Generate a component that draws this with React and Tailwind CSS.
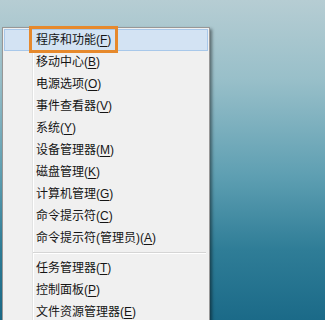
import React from 'react';

const items = [
    { label: '程序和功能', key: 'F', active: true },
    { label: '移动中心', key: 'B' },
    { label: '电源选项', key: 'O' },
    { label: '事件查看器', key: 'V' },
    { label: '系统', key: 'Y' },
    { label: '设备管理器', key: 'M' },
    { label: '磁盘管理', key: 'K' },
    { label: '计算机管理', key: 'G' },
    { label: '命令提示符', key: 'C' },
    { label: '命令提示符(管理员)', key: 'A' },
    { sep: true },
    { label: '任务管理器', key: 'T' },
    { label: '控制面板', key: 'P' },
    { label: '文件资源管理器', key: 'E' },
];

const MenuRow = ({ item }) => {
    if (item.sep) {
        return (
            <div className="h-[8px] flex flex-col justify-center pl-[29px] pr-[2px]">
                <div className="h-px bg-[#d5d5d5]" />
                <div className="h-px bg-white" />
            </div>
        );
    }
    return (
        <div className="relative h-[22px] flex items-center">
            {item.active && (
                <div className="absolute inset-y-0 left-0 right-0 bg-[#d3e3f3] border border-[#a8c8ea]" />
            )}
            <span className="relative pl-[32px] text-[12px] text-[#151515] leading-none">
                {item.label}(<span className="underline underline-offset-2">{item.key}</span>)
            </span>
            {item.active && (
                <div className="absolute left-[25px] top-[-3px] w-[89px] h-[27px] border-[3px] border-[#e6892c]" />
            )}
        </div>
    );
};

export default function App() {
    return (
        <div
            className="w-[325px] h-[320px] overflow-hidden bg-[linear-gradient(to_bottom,#b6cdd3_0%,#98bfc9_25%,#5e9fb2_55%,#2f7d97_78%,#1b6a88_100%)]"
            style={{ fontFamily: '"Liberation Sans", "Noto Sans CJK SC", sans-serif' }}
        >
            <div className="pt-[27px] pl-[2px]">
                <div className="relative w-[208px] h-[310px] bg-[#f0f0f0] border border-[#979797] p-px shadow-[2px_2px_3px_rgba(0,0,0,0.45)]">
                    <div className="absolute top-0 bottom-0 left-[29px] w-px bg-[#e2e3e3]" />
                    <div className="absolute top-0 bottom-0 left-[30px] w-px bg-white" />
                    <div className="relative flex flex-col">
                        {items.map((item, i) => (
                            <MenuRow key={i} item={item} />
                        ))}
                    </div>
                </div>
            </div>
        </div>
    );
}
